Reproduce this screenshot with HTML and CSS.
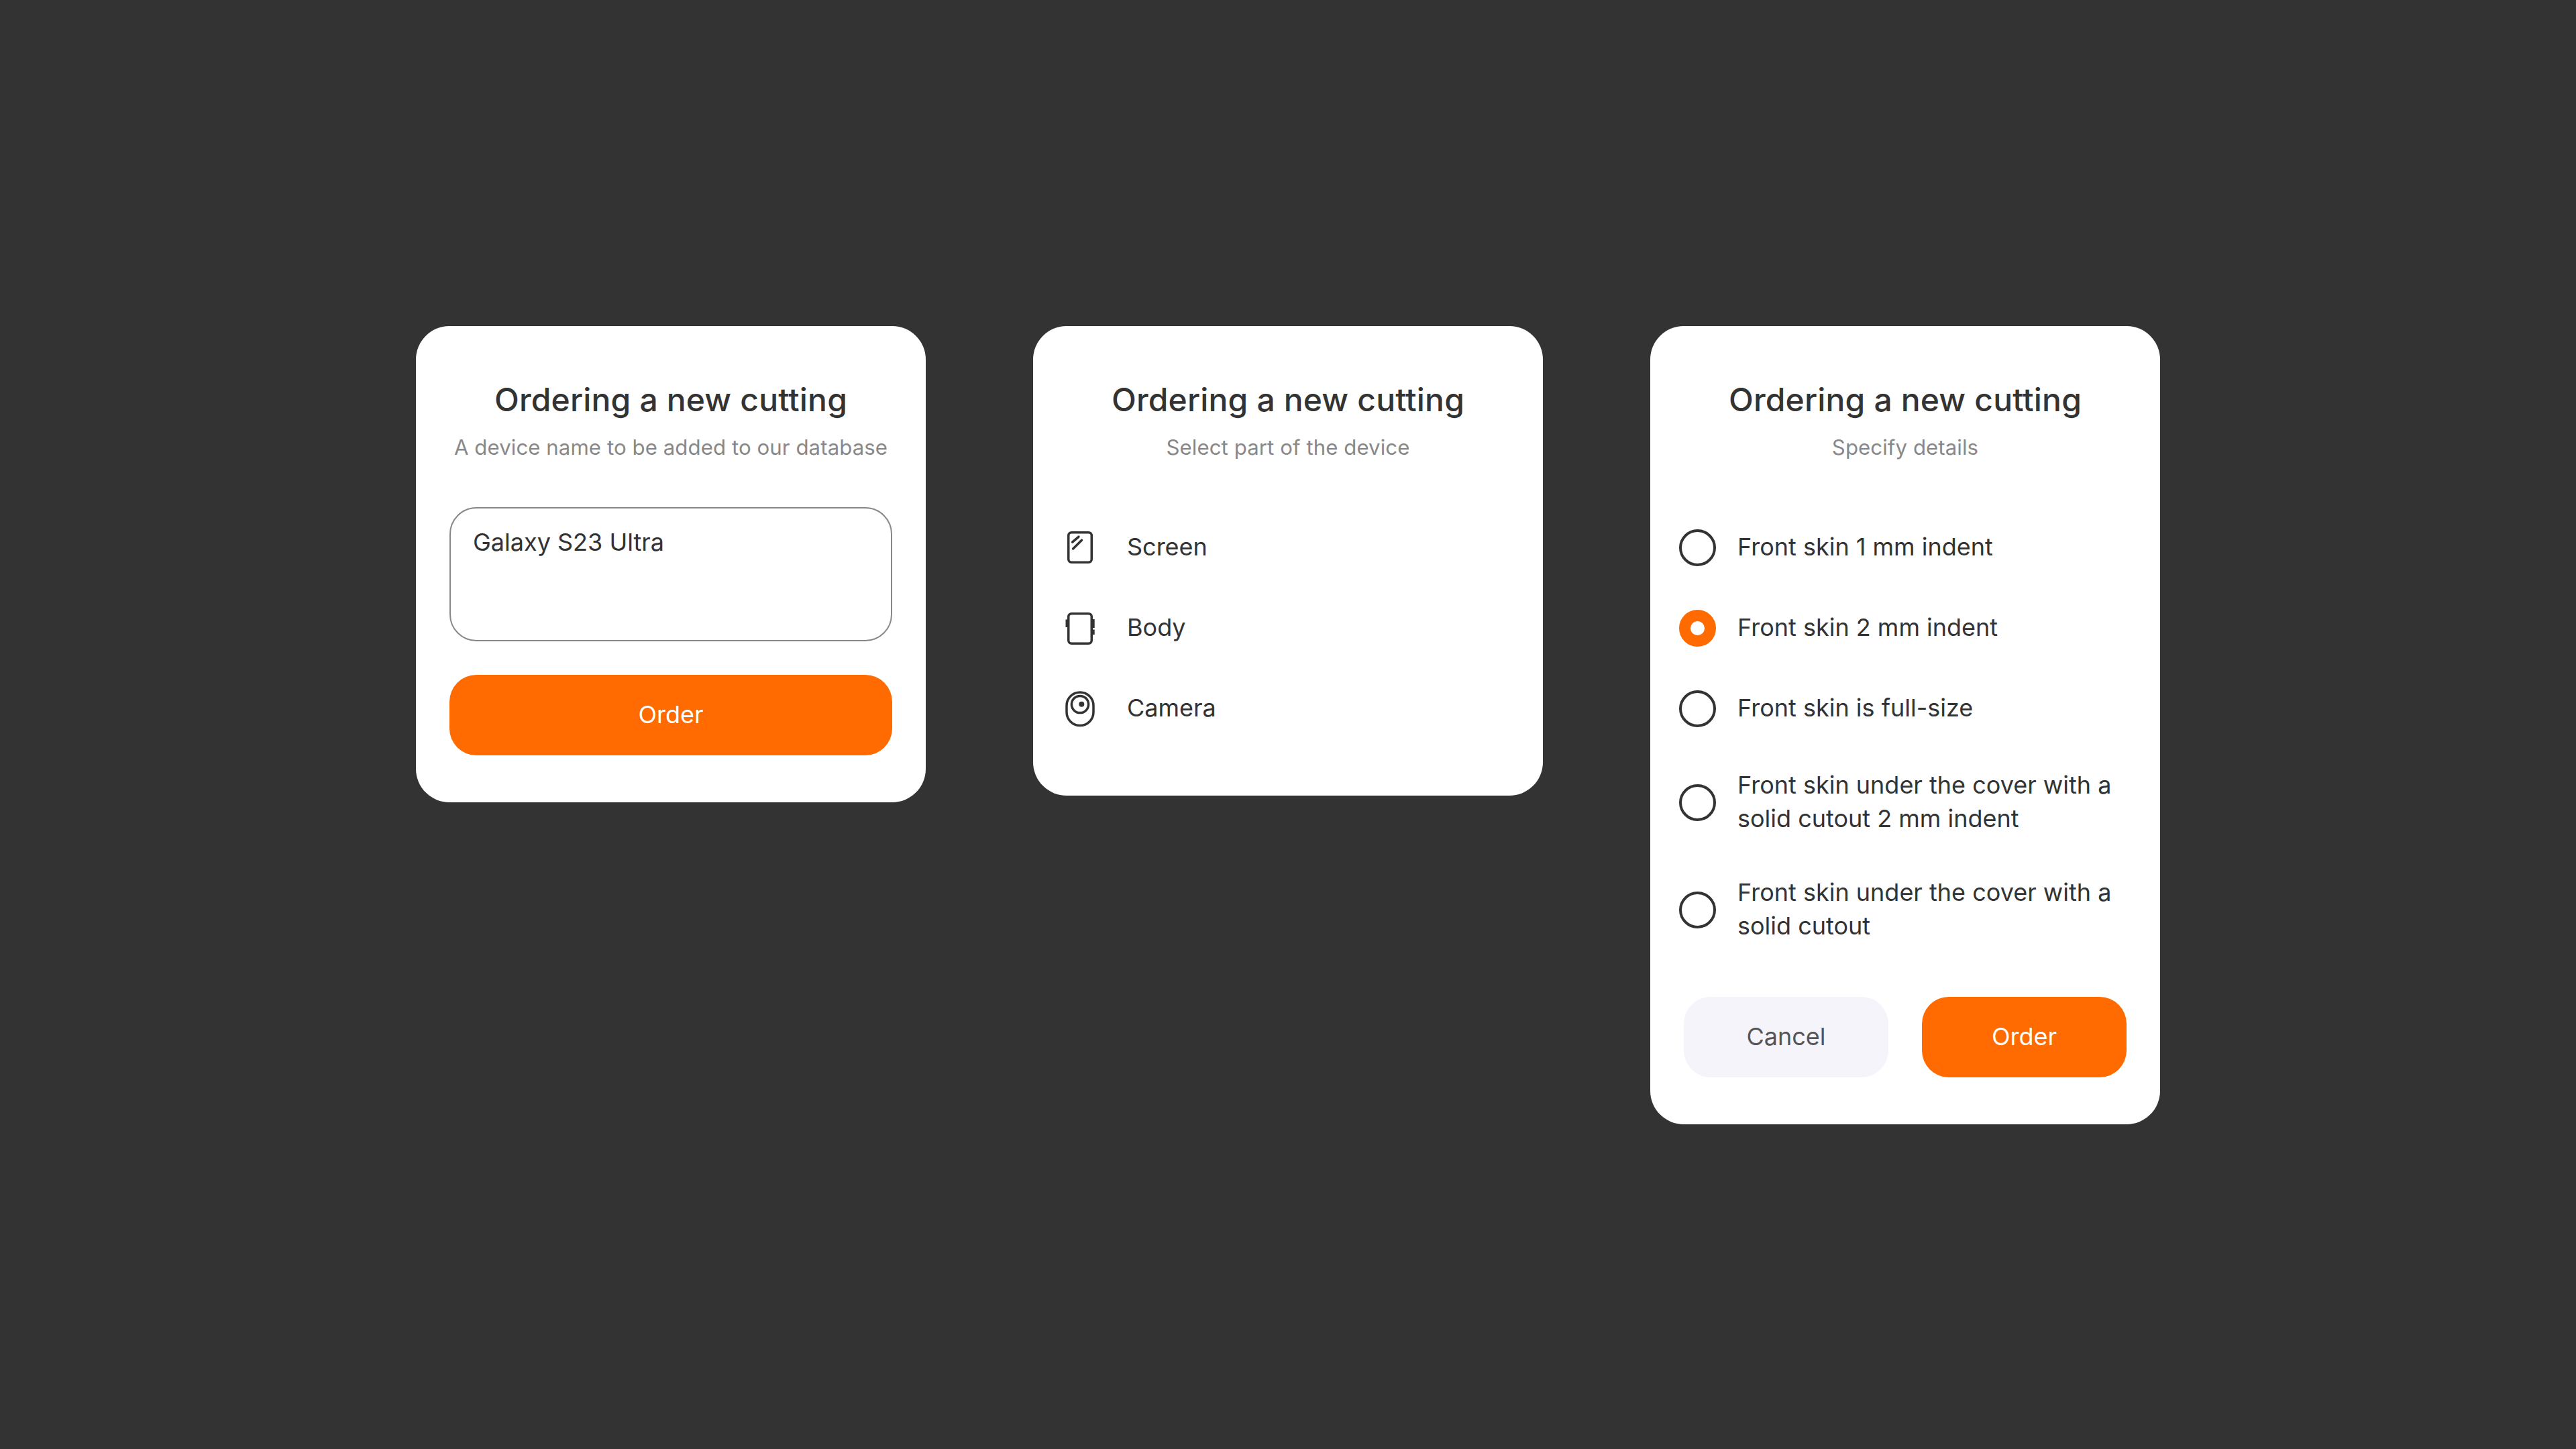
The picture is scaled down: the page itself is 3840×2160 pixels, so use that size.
FILE: index.html
```html
<!DOCTYPE html>
<html lang="en">
<head>
<meta charset="utf-8">
<title>Ordering a new cutting</title>
<link rel="stylesheet" href="styles.css">
</head>
<body>
<main class="cards">
  <section class="card">
    <header class="head">
      <h2 class="title">Ordering a new cutting</h2>
      <p class="sub">A device name to be added to our database</p>
    </header>
    <div class="field">Galaxy S23 Ultra</div>
    <div class="actions">
      <button class="btn btn-primary">Order</button>
    </div>
  </section>

  <section class="card">
    <header class="head">
      <h2 class="title">Ordering a new cutting</h2>
      <p class="sub">Select part of the device</p>
    </header>
    <ul class="list">
      <li class="row row-icon">
        <svg class="icon" viewBox="0 0 60 60" fill="none" stroke="#333" stroke-width="3.5" stroke-linecap="round">
          <rect x="12.75" y="7.75" width="34.5" height="44.5" rx="4.5"/>
          <path d="M18.6 22.2 28 14.2M19.6 32 32.5 19.2"/>
        </svg>
        <span class="row-text">Screen</span>
      </li>
      <li class="row row-icon">
        <svg class="icon" viewBox="0 0 60 60" fill="none" stroke="#333" stroke-width="3.5">
          <rect x="12.75" y="8.75" width="34.5" height="44.5" rx="4.5"/>
          <path d="M10 17.5V29M50.2 17V30M50.2 32.5V40" stroke-width="3"/>
        </svg>
        <span class="row-text">Body</span>
      </li>
      <li class="row row-icon">
        <svg class="icon" viewBox="0 0 60 60" fill="none" stroke="#333" stroke-width="3.5">
          <rect x="10" y="6" width="40" height="49.5" rx="20"/>
          <circle cx="30" cy="24" r="12.6"/>
          <circle cx="32.3" cy="23.7" r="4" fill="#333" stroke="none"/>
        </svg>
        <span class="row-text">Camera</span>
      </li>
    </ul>
  </section>

  <section class="card">
    <header class="head">
      <h2 class="title">Ordering a new cutting</h2>
      <p class="sub">Specify details</p>
    </header>
    <ul class="list">
      <li class="row row-radio"><span class="radio-box"><span class="radio"></span></span><span class="row-text">Front skin 1 mm indent</span></li>
      <li class="row row-radio"><span class="radio-box"><span class="radio radio-on"></span></span><span class="row-text">Front skin 2 mm indent</span></li>
      <li class="row row-radio"><span class="radio-box"><span class="radio"></span></span><span class="row-text">Front skin is full-size</span></li>
      <li class="row row-radio"><span class="radio-box"><span class="radio"></span></span><span class="row-text">Front skin under the cover with a solid cutout 2 mm indent</span></li>
      <li class="row row-radio"><span class="radio-box"><span class="radio"></span></span><span class="row-text">Front skin under the cover with a solid cutout</span></li>
    </ul>
    <div class="actions actions-split">
      <button class="btn btn-muted">Cancel</button>
      <button class="btn btn-primary">Order</button>
    </div>
  </section>
</main>
</body>
</html>
```
FILE: styles.css
```css
* { box-sizing: border-box; }
html, body { margin: 0; height: 100%; }
body {
  background: #333333;
  font-family: "Inter", "Liberation Sans", sans-serif;
  color: #333333;
}
.cards {
  display: flex;
  align-items: flex-start;
  justify-content: center;
  gap: 160px;
  padding-top: 486px;
}
.card {
  width: 760px;
  padding: 80px 50px 70px;
  background: #ffffff;
  border-radius: 50px;
}
.head { margin-bottom: 69px; text-align: center; }
.title {
  margin: 0;
  font-size: 48px;
  line-height: 60px;
  font-weight: 500;
  letter-spacing: 0.16px;
}
.sub {
  margin: 21px 0 0;
  font-size: 31.2px;
  line-height: 40px;
  letter-spacing: 0.07px;
  color: #888888;
}
.field {
  height: 200px;
  padding: 26px 33px;
  border: 2px solid #888888;
  border-radius: 40px;
  font-size: 36px;
  line-height: 48px;
}
.actions { margin-top: 50px; display: flex; }
.actions-split { gap: 50px; justify-content: center; }
.btn {
  flex: 1;
  height: 120px;
  padding: 0 0 2px;
  border: 0;
  border-radius: 40px;
  font: 400 36px/48px "Inter", "Liberation Sans", sans-serif;
}
.actions-split .btn { flex: 0 0 305px; }
.btn-primary { background: #ff6b00; color: #ffffff; }
.btn-muted { background: #f6f4fb; color: #555555; }
.list {
  list-style: none;
  margin: 0 -10px;
  padding: 0;
}
.row {
  display: flex;
  align-items: center;
  min-height: 120px;
  padding: 30px 0;
  font-size: 36px;
  line-height: 50px;
}
.row-text { padding-bottom: 1px; margin-top: -1px; }
.row-icon { gap: 40px; }
.row-radio { gap: 30px; }
.icon { width: 60px; height: 60px; flex: none; }
.radio-box {
  flex: none;
  width: 60px;
  height: 60px;
  display: flex;
  align-items: center;
  justify-content: center;
}
.radio {
  width: 55px;
  height: 55px;
  border: 4px solid #333333;
  border-radius: 50%;
}
.radio-on {
  border: 17px solid #ff6b00;
  background: #ffffff;
}
```
